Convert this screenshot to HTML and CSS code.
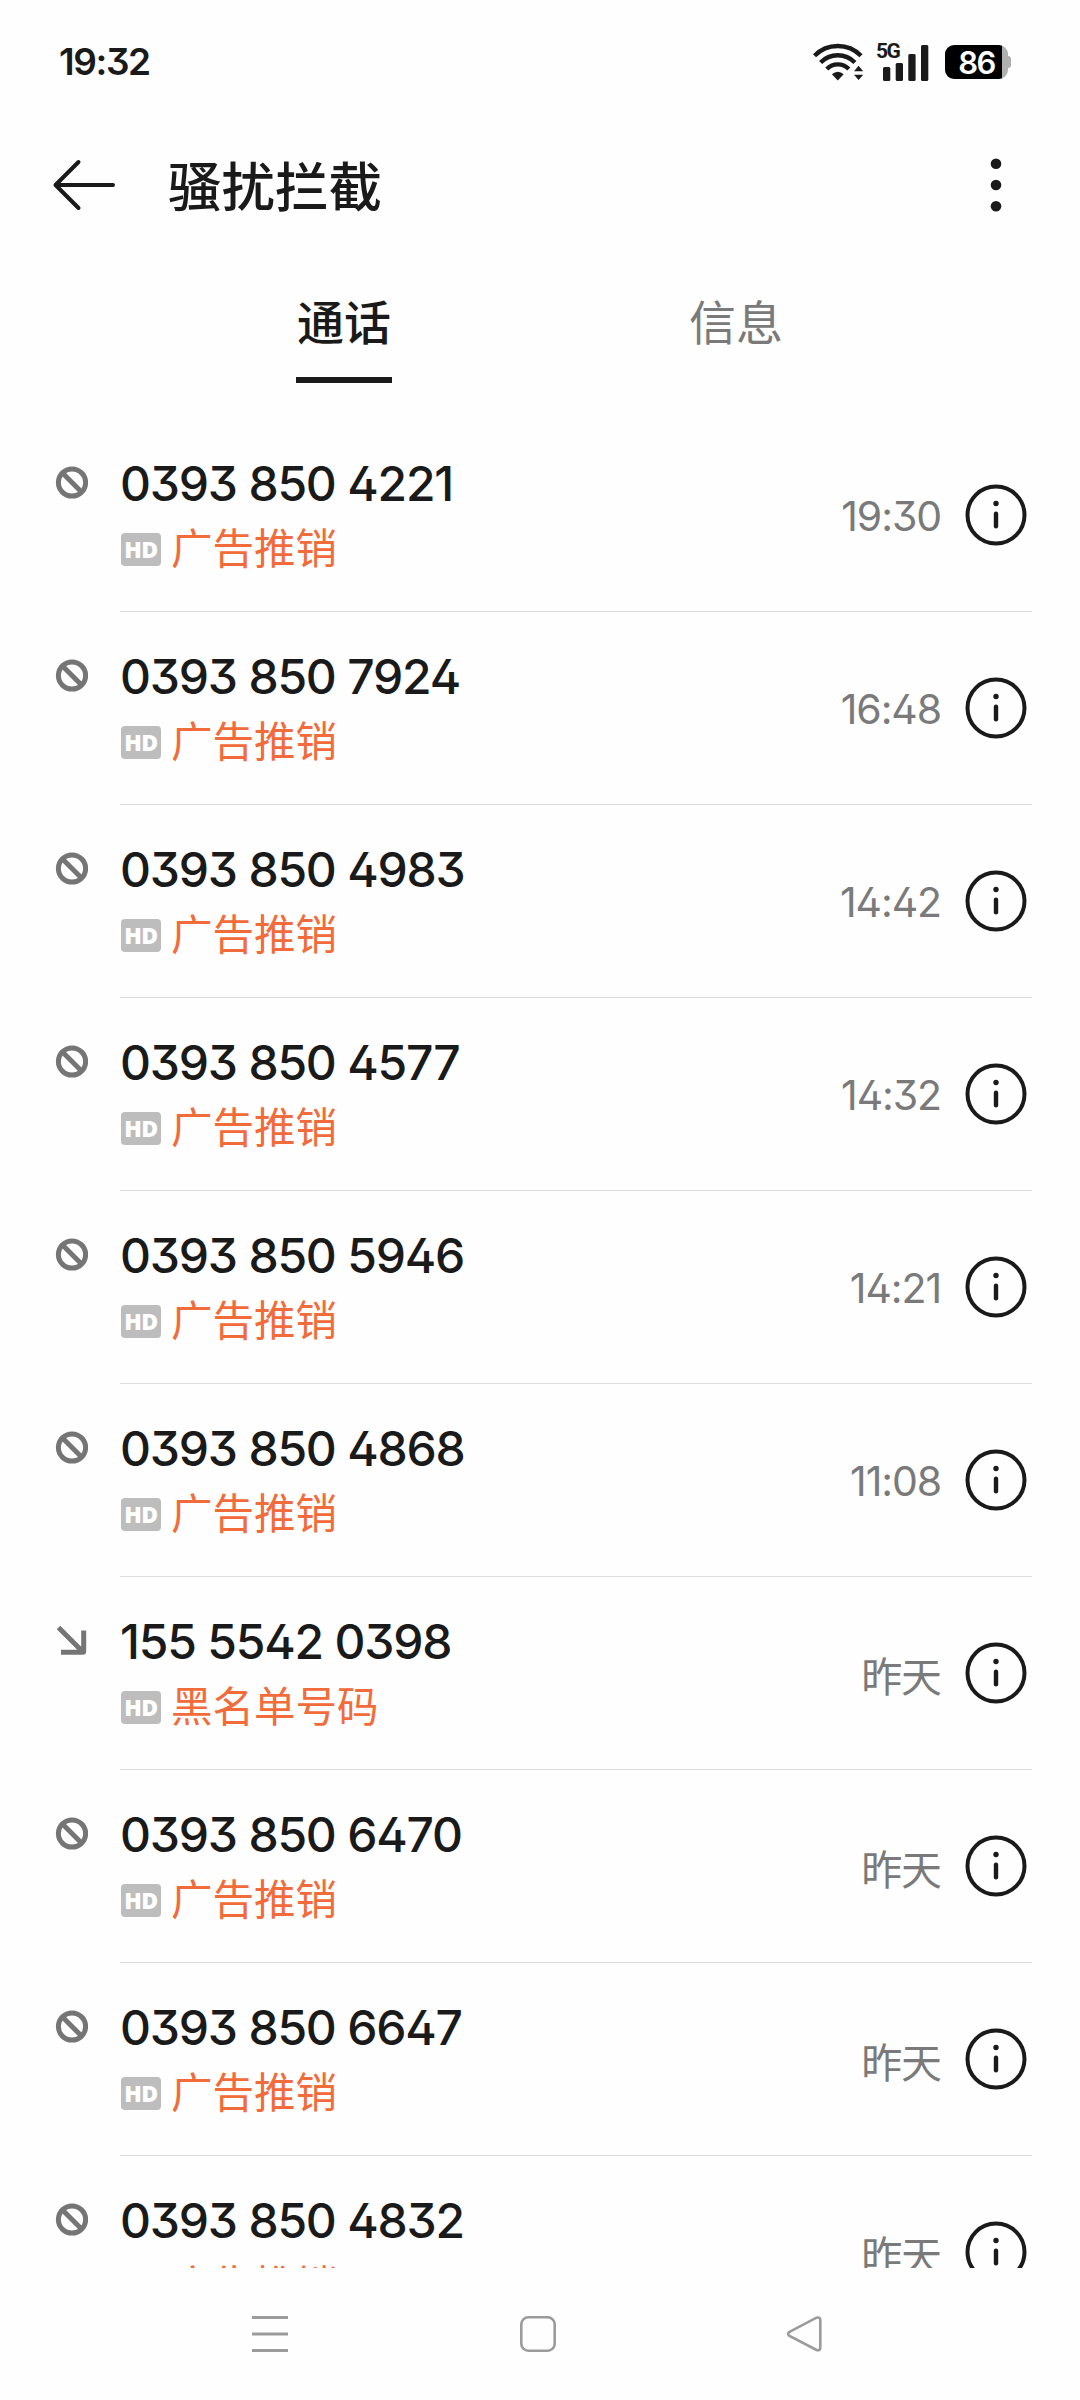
FILE: index.html
```html
<!DOCTYPE html>
<html lang="zh-CN">
<head>
    <meta charset="UTF-8">
    <title>骚扰拦截</title>
    <link rel="stylesheet" href="styles.css">
</head>
<body>
    <!-- shared icons -->
    <svg class="icon-defs" width="0" height="0">
        <symbol id="icon-block" viewBox="0 0 33 33">
            <circle cx="17" cy="16.5" r="13.6" fill="none" stroke="#757575" stroke-width="5"/>
            <path d="M7.500 7l19 19" stroke="#757575" stroke-width="5"/>
        </symbol>
        <symbol id="icon-incoming" viewBox="0 0 33 33">
            <path d="M3.500 3.500L28 28M6 28.200h21.700a1 1 0 0 0 1-1V6.500" fill="none" stroke="#757575" stroke-width="5"/>
        </symbol>
        <symbol id="icon-info" viewBox="0 0 62 62">
            <circle cx="31" cy="31" r="28.5" fill="none" stroke="#1a1a1a" stroke-width="4"/>
            <circle cx="31" cy="19.5" r="2.7" fill="#1a1a1a"/>
            <path d="M31 29.8v12.4" stroke="#1a1a1a" stroke-width="4.4" stroke-linecap="round"/>
        </symbol>
    </svg>

    <div class="screen">
        <div class="status-bar">
            <span class="clock">19:32</span>
            <div class="status-icons">
                <svg class="wifi" width="52" height="38" viewBox="0 0 52 38">
                    <g fill="none" stroke="#1a1a1a" stroke-width="4.4">
                        <path d="M1.500 12.800a32.500 32.500 0 0 1 46.500 0"/>
                        <path d="M7.600 19.500a24 24 0 0 1 34.300 0"/>
                        <path d="M13.800 26a15.500 15.500 0 0 1 22 0"/>
                    </g>
                    <path d="M18.900 31.200q6-5 11.800 0L24.800 37.500z" fill="#1a1a1a"/>
                    <path d="M41 28.300l4.600-5.500 4.600 5.500zM41 31.700h9.200l-4.600 5.300z" fill="#1a1a1a"/>
                </svg>
                <div class="signal">
                    <span class="network">5G</span>
                    <svg width="46" height="38" viewBox="0 0 46 38">
                        <g fill="#1a1a1a">
                            <rect x="0" y="24" width="7.300" height="14" rx="1.500"/>
                            <rect x="12.700" y="20" width="7.300" height="18" rx="1.500"/>
                            <rect x="25.300" y="11" width="7.300" height="27" rx="1.500"/>
                            <rect x="38" y="2" width="7.300" height="36" rx="1.500"/>
                        </g>
                    </svg>
                </div>
                <div class="battery"><span>86</span></div>
            </div>
        </div>

        <div class="title-bar">
            <svg width="66" height="54" viewBox="0 0 66 54">
                <path d="M28.500 4L5.500 27l23 23M6 27h57" fill="none" stroke="#1a1a1a" stroke-width="4" stroke-linecap="round" stroke-linejoin="round"/>
            </svg>
            <h1>骚扰拦截</h1>
            <svg class="more" width="12" height="54" viewBox="0 0 12 54">
                <g fill="#1a1a1a">
                    <circle cx="6" cy="5.700" r="5.300"/>
                    <circle cx="6" cy="27" r="5.300"/>
                    <circle cx="6" cy="48.300" r="5.300"/>
                </g>
            </svg>
        </div>

        <div class="tabs">
            <div class="tab active"><span>通话</span></div>
            <div class="tab"><span>信息</span></div>
        </div>

        <div class="call-list">
            <div class="call">
                <svg class="call-type"><use href="#icon-block"/></svg>
                <div class="call-body">
                    <div class="call-text">
                        <div class="number">0393 850 4221</div>
                        <div class="label"><span class="hd">HD</span>广告推销</div>
                    </div>
                    <span class="time">19:30</span>
                    <svg class="info"><use href="#icon-info"/></svg>
                </div>
            </div>
            <div class="call">
                <svg class="call-type"><use href="#icon-block"/></svg>
                <div class="call-body">
                    <div class="call-text">
                        <div class="number">0393 850 7924</div>
                        <div class="label"><span class="hd">HD</span>广告推销</div>
                    </div>
                    <span class="time">16:48</span>
                    <svg class="info"><use href="#icon-info"/></svg>
                </div>
            </div>
            <div class="call">
                <svg class="call-type"><use href="#icon-block"/></svg>
                <div class="call-body">
                    <div class="call-text">
                        <div class="number">0393 850 4983</div>
                        <div class="label"><span class="hd">HD</span>广告推销</div>
                    </div>
                    <span class="time">14:42</span>
                    <svg class="info"><use href="#icon-info"/></svg>
                </div>
            </div>
            <div class="call">
                <svg class="call-type"><use href="#icon-block"/></svg>
                <div class="call-body">
                    <div class="call-text">
                        <div class="number">0393 850 4577</div>
                        <div class="label"><span class="hd">HD</span>广告推销</div>
                    </div>
                    <span class="time">14:32</span>
                    <svg class="info"><use href="#icon-info"/></svg>
                </div>
            </div>
            <div class="call">
                <svg class="call-type"><use href="#icon-block"/></svg>
                <div class="call-body">
                    <div class="call-text">
                        <div class="number">0393 850 5946</div>
                        <div class="label"><span class="hd">HD</span>广告推销</div>
                    </div>
                    <span class="time">14:21</span>
                    <svg class="info"><use href="#icon-info"/></svg>
                </div>
            </div>
            <div class="call">
                <svg class="call-type"><use href="#icon-block"/></svg>
                <div class="call-body">
                    <div class="call-text">
                        <div class="number">0393 850 4868</div>
                        <div class="label"><span class="hd">HD</span>广告推销</div>
                    </div>
                    <span class="time">11:08</span>
                    <svg class="info"><use href="#icon-info"/></svg>
                </div>
            </div>
            <div class="call">
                <svg class="call-type"><use href="#icon-incoming"/></svg>
                <div class="call-body">
                    <div class="call-text">
                        <div class="number">155 5542 0398</div>
                        <div class="label"><span class="hd">HD</span>黑名单号码</div>
                    </div>
                    <span class="time">昨天</span>
                    <svg class="info"><use href="#icon-info"/></svg>
                </div>
            </div>
            <div class="call">
                <svg class="call-type"><use href="#icon-block"/></svg>
                <div class="call-body">
                    <div class="call-text">
                        <div class="number">0393 850 6470</div>
                        <div class="label"><span class="hd">HD</span>广告推销</div>
                    </div>
                    <span class="time">昨天</span>
                    <svg class="info"><use href="#icon-info"/></svg>
                </div>
            </div>
            <div class="call">
                <svg class="call-type"><use href="#icon-block"/></svg>
                <div class="call-body">
                    <div class="call-text">
                        <div class="number">0393 850 6647</div>
                        <div class="label"><span class="hd">HD</span>广告推销</div>
                    </div>
                    <span class="time">昨天</span>
                    <svg class="info"><use href="#icon-info"/></svg>
                </div>
            </div>
            <div class="call">
                <svg class="call-type"><use href="#icon-block"/></svg>
                <div class="call-body">
                    <div class="call-text">
                        <div class="number">0393 850 4832</div>
                        <div class="label"><span class="hd">HD</span>广告推销</div>
                    </div>
                    <span class="time">昨天</span>
                    <svg class="info"><use href="#icon-info"/></svg>
                </div>
            </div>
        </div>

        <div class="nav-bar">
            <svg width="36" height="36" viewBox="0 0 36 36">
                <path d="M0 1.500h36M0 18h36M0 34.500h36" stroke="#9b9b9b" stroke-width="3"/>
            </svg>
            <svg width="36" height="36" viewBox="0 0 36 36">
                <rect x="1.300" y="1.300" width="33.400" height="33.400" rx="7" fill="none" stroke="#9b9b9b" stroke-width="2.600"/>
            </svg>
            <svg width="36" height="36" viewBox="0 0 36 36">
                <path d="M2.500 15.800L29.500 1.700Q33.300 .8 33.300 4v27.500Q33.300 35 29.500 34L2.500 20Q-.2 17.900 2.500 15.800z" fill="none" stroke="#9b9b9b" stroke-width="2.600"/>
            </svg>
        </div>
    </div>
</body>
</html>
```

FILE: styles.css
```css
body {
    margin: 0;
    background-color: #fefefe;
    color: #1a1a1a;
    font-family: Inter, "Noto Sans CJK SC", sans-serif;
    font-feature-settings: "cv09", "cv02";
}
svg {
    display: block;
    flex-shrink: 0;
}
.icon-defs {
    position: absolute;
}
.screen {
    width: 1080px;
    height: 2400px;
    display: flex;
    flex-direction: column;
    overflow: hidden;
}

/* status bar */
.status-bar {
    display: flex;
    justify-content: space-between;
    align-items: center;
    height: 124px;
    padding: 0 69px 0 59px;
    box-sizing: border-box;
}
.clock {
    font-size: 37px;
    font-weight: 600;
    line-height: 44px;
    letter-spacing: -1.4px;
}
.status-icons {
    display: flex;
    align-items: center;
}
.wifi {
    margin-right: 18px;
}
.signal {
    position: relative;
    margin-right: 16px;
}
.network {
    position: absolute;
    left: -7px;
    top: -2px;
    font-family: "Liberation Sans Narrow", Roboto, sans-serif;
    font-size: 21px;
    font-weight: bold;
    line-height: 21px;
    letter-spacing: -1.5px;
}
.battery {
    position: relative;
    width: 63px;
    height: 34px;
    margin-right: 3px;
    border-radius: 9px;
    background: linear-gradient(to right, #000 57px, #b0b0b0 57px);
    color: #fff;
    font-size: 31px;
    font-weight: 600;
    line-height: 36px;
    text-align: center;
}
.battery span {
    letter-spacing: -1.5px;
}
.battery::after {
    content: "";
    position: absolute;
    right: -3px;
    top: 11px;
    width: 3px;
    height: 12px;
    border-radius: 0 3px 3px 0;
    background-color: #b0b0b0;
}

/* title */
.title-bar {
    display: flex;
    align-items: center;
    height: 122px;
    padding: 0 78px 0 50px;
}
.title-bar h1 {
    margin: 0 0 0 52px;
    padding-top: 5px;
    font-size: 53.5px;
    font-weight: 500;
    line-height: 80px;
}
.more {
    margin-left: auto;
}

/* tabs */
.tabs {
    display: flex;
    height: 137px;
    padding: 0 148px;
    margin-bottom: 36px;
}
.tab {
    flex: 1;
    display: flex;
    justify-content: center;
    color: #7a7a7a;
    font-size: 47px;
    line-height: 154px;
}
.tab span {
    height: 131px;
    padding: 0 1px;
}
.tab.active {
    color: #1a1a1a;
    font-weight: 500;
}
.tab.active span {
    border-bottom: 6px solid #1a1a1a;
}

/* call list */
.call-list {
    height: 1849px;
    overflow: hidden;
}
.call {
    display: flex;
    height: 193px;
    padding: 0 48px 0 55px;
}
.call-type {
    width: 33px;
    height: 33px;
    margin: 47px 32px 0 0;
}
.call-body {
    flex: 1;
    display: flex;
    align-items: center;
    border-bottom: 1px solid #dcdcdc;
    padding-right: 5px;
}
.call-text {
    flex: 1;
    padding-top: 6px;
}
.number {
    font-size: 48px;
    font-weight: 500;
    line-height: 60px;
    letter-spacing: -1.2px;
}
.label {
    display: flex;
    align-items: center;
    margin-top: 2px;
    color: #f26b3a;
    font-size: 41.5px;
    line-height: 66px;
}
.hd {
    width: 40px;
    height: 33px;
    margin: 0 10px 0 1px;
    border-radius: 4px;
    background-color: #bdbdbd;
    color: #fff;
    font-family: "Open Sans", sans-serif;
    font-size: 23px;
    font-weight: 800;
    line-height: 33px;
    text-align: center;
    letter-spacing: -0.5px;
}
.time {
    margin-right: 24px;
    padding-top: 1px;
    color: #7a7a7a;
    font-size: 41px;
    font-weight: 400;
    letter-spacing: -1.1px;
}
.info {
    width: 62px;
    height: 62px;
}

/* navigation bar */
.nav-bar {
    flex: 1;
    display: flex;
    align-items: center;
    justify-content: space-between;
    padding: 0 257px 0 252px;
}
```
